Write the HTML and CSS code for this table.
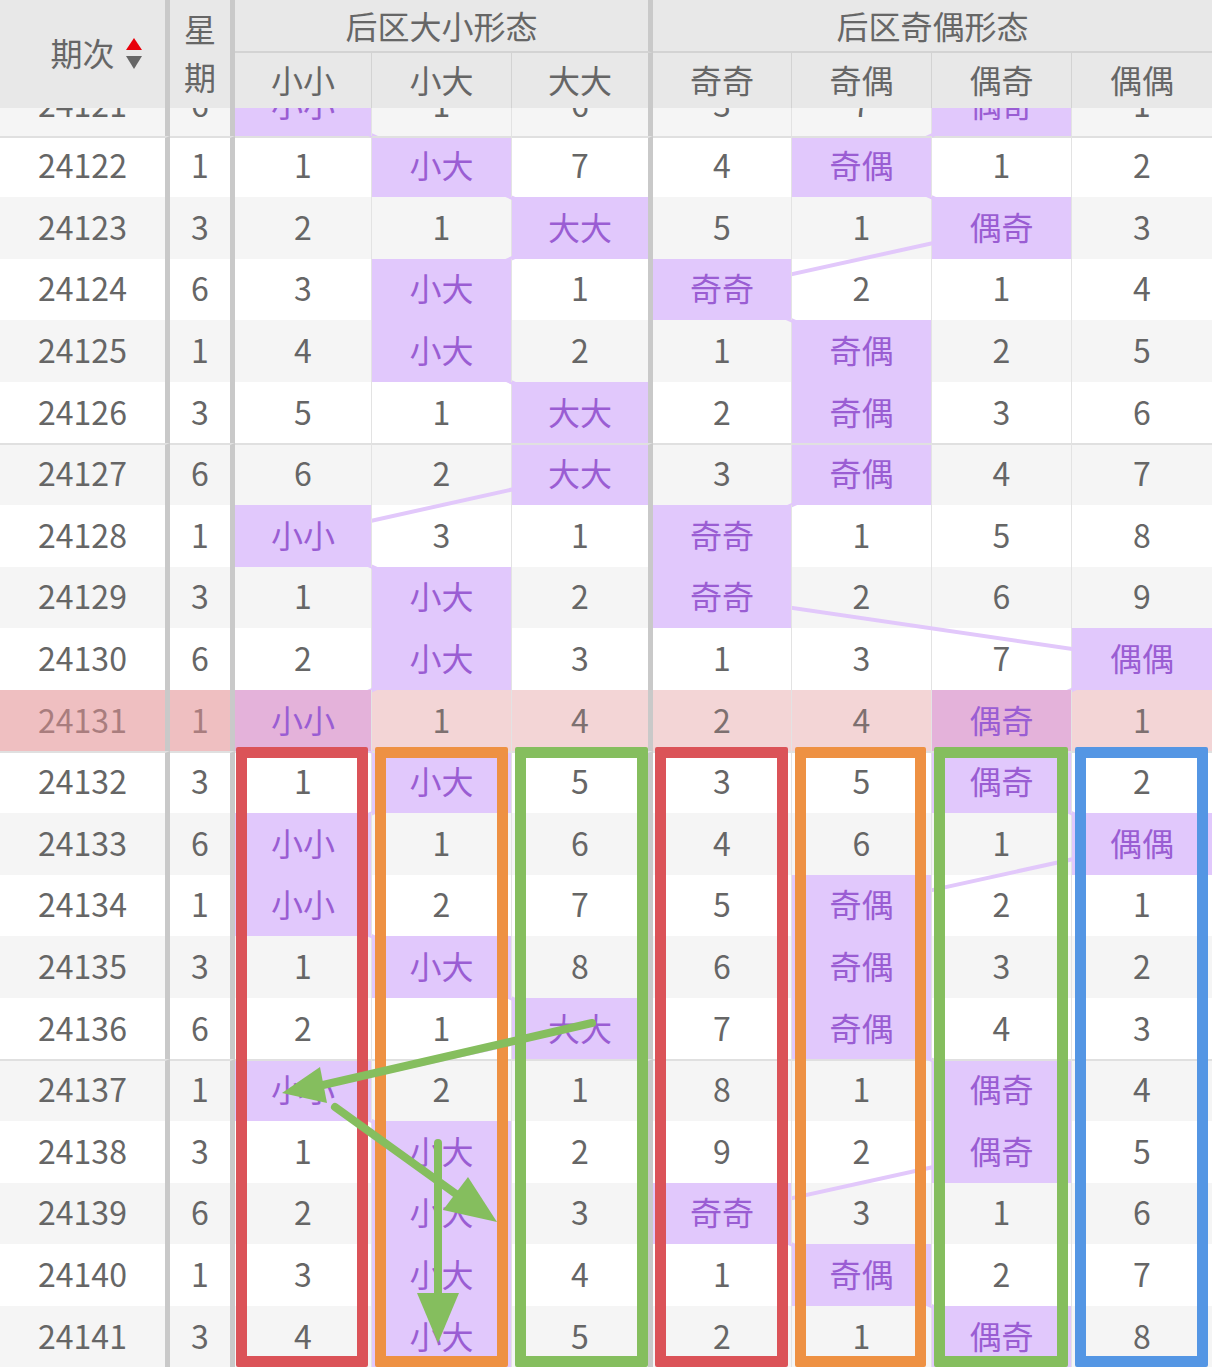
FILE: index.html
```html
<!DOCTYPE html>
<html lang="zh-CN">
<head>
<meta charset="utf-8">
<title>后区形态走势</title>
<link rel="stylesheet" href="styles.css">
</head>
<body>
<div class="page">
  <div class="head">
    <div class="h h-id"><span class="id-t">期次<svg class="sort" width="16" height="31" viewBox="0 0 16 31"><polygon points="8,0 16,12 0,12" fill="#e8000b"/><polygon points="0,18 16,18 8,31" fill="#666"/></svg></span></div>
    <div class="h h-wk"><span class="wk-t">星期</span></div>
    <div class="h h-grp g1">后区大小形态</div>
    <div class="h h-grp g2">后区奇偶形态</div>
    <div class="h h-sub">小小</div>
    <div class="h h-sub">小大</div>
    <div class="h h-sub end">大大</div>
    <div class="h h-sub">奇奇</div>
    <div class="h h-sub">奇偶</div>
    <div class="h h-sub">偶奇</div>
    <div class="h h-sub last">偶偶</div>
  </div>

  <div class="scroll">
    <div class="grid">
      <div class="row alt"><div class="c">24121</div><div class="c">6</div><div class="c hi">小小</div><div class="c">1</div><div class="c">6</div><div class="c">3</div><div class="c">7</div><div class="c hi">偶奇</div><div class="c">1</div></div>
      <div class="row sep"><div class="c">24122</div><div class="c">1</div><div class="c">1</div><div class="c hi">小大</div><div class="c">7</div><div class="c">4</div><div class="c hi">奇偶</div><div class="c">1</div><div class="c">2</div></div>
      <div class="row alt"><div class="c">24123</div><div class="c">3</div><div class="c">2</div><div class="c">1</div><div class="c hi">大大</div><div class="c">5</div><div class="c">1</div><div class="c hi">偶奇</div><div class="c">3</div></div>
      <div class="row"><div class="c">24124</div><div class="c">6</div><div class="c">3</div><div class="c hi">小大</div><div class="c">1</div><div class="c hi">奇奇</div><div class="c">2</div><div class="c">1</div><div class="c">4</div></div>
      <div class="row alt"><div class="c">24125</div><div class="c">1</div><div class="c">4</div><div class="c hi">小大</div><div class="c">2</div><div class="c">1</div><div class="c hi">奇偶</div><div class="c">2</div><div class="c">5</div></div>
      <div class="row"><div class="c">24126</div><div class="c">3</div><div class="c">5</div><div class="c">1</div><div class="c hi">大大</div><div class="c">2</div><div class="c hi">奇偶</div><div class="c">3</div><div class="c">6</div></div>
      <div class="row alt sep"><div class="c">24127</div><div class="c">6</div><div class="c">6</div><div class="c">2</div><div class="c hi">大大</div><div class="c">3</div><div class="c hi">奇偶</div><div class="c">4</div><div class="c">7</div></div>
      <div class="row"><div class="c">24128</div><div class="c">1</div><div class="c hi">小小</div><div class="c">3</div><div class="c">1</div><div class="c hi">奇奇</div><div class="c">1</div><div class="c">5</div><div class="c">8</div></div>
      <div class="row alt"><div class="c">24129</div><div class="c">3</div><div class="c">1</div><div class="c hi">小大</div><div class="c">2</div><div class="c hi">奇奇</div><div class="c">2</div><div class="c">6</div><div class="c">9</div></div>
      <div class="row"><div class="c">24130</div><div class="c">6</div><div class="c">2</div><div class="c hi">小大</div><div class="c">3</div><div class="c">1</div><div class="c">3</div><div class="c">7</div><div class="c hi">偶偶</div></div>
      <div class="row now"><div class="c">24131</div><div class="c">1</div><div class="c hi">小小</div><div class="c">1</div><div class="c">4</div><div class="c">2</div><div class="c">4</div><div class="c hi">偶奇</div><div class="c">1</div></div>
      <div class="row sep"><div class="c">24132</div><div class="c">3</div><div class="c">1</div><div class="c hi">小大</div><div class="c">5</div><div class="c">3</div><div class="c">5</div><div class="c hi">偶奇</div><div class="c">2</div></div>
      <div class="row alt"><div class="c">24133</div><div class="c">6</div><div class="c hi">小小</div><div class="c">1</div><div class="c">6</div><div class="c">4</div><div class="c">6</div><div class="c">1</div><div class="c hi">偶偶</div></div>
      <div class="row"><div class="c">24134</div><div class="c">1</div><div class="c hi">小小</div><div class="c">2</div><div class="c">7</div><div class="c">5</div><div class="c hi">奇偶</div><div class="c">2</div><div class="c">1</div></div>
      <div class="row alt"><div class="c">24135</div><div class="c">3</div><div class="c">1</div><div class="c hi">小大</div><div class="c">8</div><div class="c">6</div><div class="c hi">奇偶</div><div class="c">3</div><div class="c">2</div></div>
      <div class="row"><div class="c">24136</div><div class="c">6</div><div class="c">2</div><div class="c">1</div><div class="c hi">大大</div><div class="c">7</div><div class="c hi">奇偶</div><div class="c">4</div><div class="c">3</div></div>
      <div class="row alt sep"><div class="c">24137</div><div class="c">1</div><div class="c hi">小小</div><div class="c">2</div><div class="c">1</div><div class="c">8</div><div class="c">1</div><div class="c hi">偶奇</div><div class="c">4</div></div>
      <div class="row"><div class="c">24138</div><div class="c">3</div><div class="c">1</div><div class="c hi">小大</div><div class="c">2</div><div class="c">9</div><div class="c">2</div><div class="c hi">偶奇</div><div class="c">5</div></div>
      <div class="row alt"><div class="c">24139</div><div class="c">6</div><div class="c">2</div><div class="c hi">小大</div><div class="c">3</div><div class="c hi">奇奇</div><div class="c">3</div><div class="c">1</div><div class="c">6</div></div>
      <div class="row"><div class="c">24140</div><div class="c">1</div><div class="c">3</div><div class="c hi">小大</div><div class="c">4</div><div class="c">1</div><div class="c hi">奇偶</div><div class="c">2</div><div class="c">7</div></div>
      <div class="row alt"><div class="c">24141</div><div class="c">3</div><div class="c">4</div><div class="c hi">小大</div><div class="c">5</div><div class="c">2</div><div class="c">1</div><div class="c hi">偶奇</div><div class="c">8</div></div>

      <svg class="links" width="1212" height="1294" viewBox="0 0 1212 1294">
        <polyline points="303,30.8 441.5,92.4 580,154 441.5,215.6 441.5,277.2 580,338.8 580,400.4 303,462 441.5,523.6 441.5,585.2 303,646.8 441.5,708.4 303,770 303,831.6 441.5,893.2 580,954.8 303,1016.4 441.5,1078 441.5,1139.6 441.5,1201.2 441.5,1262.8"/>
        <polyline points="1001.5,30.8 861.5,92.4 1001.5,154 722,215.6 861.5,277.2 861.5,338.8 861.5,400.4 722,462 722,523.6 1142,585.2 1001.5,646.8 1001.5,708.4 1142,770 861.5,831.6 861.5,893.2 861.5,954.8 1001.5,1016.4 1001.5,1078 722,1139.6 861.5,1201.2 1001.5,1262.8"/>
      </svg>

      <div class="boxes">
        <div class="box red b3"></div>
        <div class="box orange b4"></div>
        <div class="box green b5"></div>
        <div class="box red b6"></div>
        <div class="box orange b7"></div>
        <div class="box green b8"></div>
        <div class="box blue b9"></div>
      </div>

      <svg class="arrows" width="1212" height="1294" viewBox="0 0 1212 1294">
        <line x1="592" y1="949" x2="323" y2="1011"/>
        <polygon points="282,1019 320,993 327,1029"/>
        <line x1="335" y1="1033" x2="456" y2="1120"/>
        <polygon points="497,1148 468,1103 443,1136"/>
        <line x1="438" y1="1069" x2="438" y2="1221"/>
        <polygon points="438,1269 417,1219 459,1219"/>
      </svg>
    </div>
  </div>
</div>
</body>
</html>
```

FILE: styles.css
```css
html, body {
  margin: 0;
  padding: 0;
  height: 1368px;
  overflow: hidden;
  background: #ffffff;
}

.page {
  width: 1212px;
  font-family: "Noto Sans CJK SC", "Noto Sans", sans-serif;
  font-size: 32px;
  color: #666666;
}

/* ---------- header ---------- */
.head {
  display: grid;
  grid-template-columns: 170px 65px 137px 140px 141px 139px 140px 140px 140px;
  grid-template-rows: 53px 55px;
  background: #e8e8e8;
  position: relative;
  z-index: 5;
}

.h {
  box-sizing: border-box;
  display: flex;
  align-items: center;
  justify-content: center;
  line-height: 1;
  padding-bottom: 4px;
}

.h-id {
  grid-column: 1;
  grid-row: 1 / 3;
  border-right: 5px solid #c9c9c9;
}

.id-t {
  position: relative;
}

.sort {
  position: absolute;
  left: 100%;
  top: 50%;
  margin-left: 11px;
  margin-top: -14px;
}

.h-wk {
  grid-column: 2;
  grid-row: 1 / 3;
  border-right: 5px solid #c9c9c9;
}

.wk-t {
  display: block;
  width: 1em;
  line-height: 48px;
  text-align: center;
}

.h-grp {
  grid-row: 1;
  border-bottom: 2px solid #d3d3d3;
  padding-bottom: 2px;
}

.g1 {
  grid-column: 3 / 6;
  border-right: 5px solid #c9c9c9;
}

.g2 {
  grid-column: 6 / 10;
}

.h-sub {
  border-right: 1px solid #d3d3d3;
}

.h-sub.end {
  border-right: 5px solid #c9c9c9;
}

.h-sub.last {
  border-right: none;
}

/* ---------- body ---------- */
.scroll {
  height: 1260px;
  overflow: hidden;
}

.grid {
  position: relative;
  display: grid;
  grid-template-columns: 170px 65px 137px 140px 141px 139px 140px 140px 140px;
  grid-auto-rows: 61.6px;
  margin-top: -34.1px;
}

.row {
  display: contents;
}

.c {
  box-sizing: border-box;
  display: flex;
  align-items: center;
  justify-content: center;
  line-height: 1;
  padding-bottom: 4px;
  background: #ffffff;
}

.row > .c:nth-child(1),
.row > .c:nth-child(2),
.row > .c:nth-child(5) {
  border-right: 5px solid #c9c9c9;
}

.row > .c:nth-child(3),
.row > .c:nth-child(4),
.row > .c:nth-child(6),
.row > .c:nth-child(7),
.row > .c:nth-child(8) {
  border-right: 1px solid #e3e3e3;
}

.row.alt > .c {
  background: #f5f5f5;
}

.row.sep > .c {
  border-top: 2px solid #e0e0e0;
  padding-bottom: 6px;
}

.row > .c.hi {
  background: #e1c8fc;
  color: #9a5dd3;
  position: relative;
  z-index: 2;
}

.row.now > .c {
  background: #f3d5d6;
  color: #7d7070;
}

.row.now > .c:nth-child(1),
.row.now > .c:nth-child(2) {
  background: #efbfc1;
  color: #a97d7e;
}

.row.now > .c.hi {
  background: #e4b2da;
  color: #9a5dd3;
}

/* ---------- overlays ---------- */
.links {
  position: absolute;
  left: 0;
  top: 0;
  z-index: 1;
}

.links polyline {
  fill: none;
  stroke: #e2c8fb;
  stroke-width: 4;
  stroke-linejoin: round;
}

.boxes {
  position: absolute;
  left: 0;
  top: 0;
  width: 100%;
  height: 100%;
  display: grid;
  grid-template-columns: 170px 65px 137px 140px 141px 139px 140px 140px 140px;
  grid-template-rows: repeat(21, 61.6px);
  z-index: 3;
  pointer-events: none;
}

.box {
  grid-row: 12 / 22;
  border: 11px solid;
  border-radius: 2px;
  margin: -4px 4px 0 3px;
}

.box.b3 { grid-column: 3; margin-left: 1px; }
.box.b4 { grid-column: 4; }
.box.b5 { grid-column: 5; margin-right: 5px; }
.box.b6 { grid-column: 6; margin-left: 2px; }
.box.b7 { grid-column: 7; margin-right: 6px; }
.box.b8 { grid-column: 8; margin-left: 2px; }
.box.b9 { grid-column: 9; }

.box.red { border-color: #db5358; }
.box.orange { border-color: #ee9143; }
.box.green { border-color: #85be5e; }
.box.blue { border-color: #5496e4; }

.arrows {
  position: absolute;
  left: 0;
  top: 0;
  z-index: 4;
}

.arrows line {
  stroke: #85be5e;
  stroke-width: 8;
  stroke-linecap: round;
}

.arrows polygon {
  fill: #85be5e;
}
```
